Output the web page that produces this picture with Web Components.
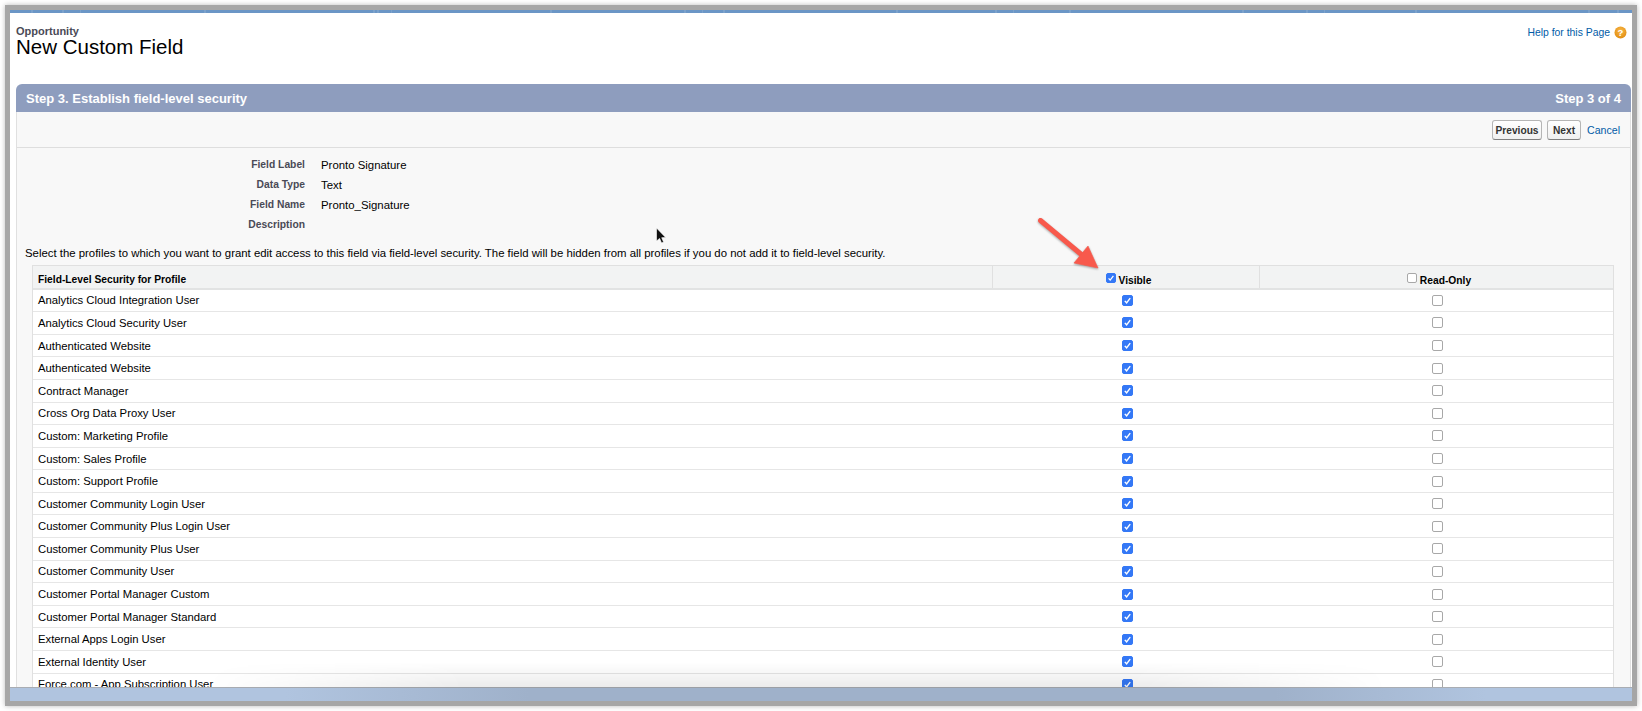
<!doctype html>
<html>
<head>
<meta charset="utf-8">
<style>
  html,body{ margin:0; height:100%; background:#fff; }
  body{ font-family:"Liberation Sans",Arial,sans-serif; overflow:hidden; }
</style>
</head>
<body>
<sf-frame>
  <sf-page-head slot="head" object="Opportunity" title="New Custom Field"></sf-page-head>
  <sf-step-bar slot="step" title="Step 3. Establish field-level security" step="Step 3 of 4"></sf-step-bar>
  <sf-actions slot="actions"></sf-actions>
  <sf-field label="Field Label">Pronto Signature</sf-field>
  <sf-field label="Data Type">Text</sf-field>
  <sf-field label="Field Name">Pronto_Signature</sf-field>
  <sf-field label="Description"></sf-field>
  <sf-note>Select the profiles to which you want to grant edit access to this field via field-level security. The field will be hidden from all profiles if you do not add it to field-level security.</sf-note>
  <sf-profile-table></sf-profile-table>
</sf-frame>

<script type="module">
// small helper, every element below just sets its shadow html once
class Base extends HTMLElement{
  render(html){
    this.attachShadow({mode:"open"}).innerHTML = html;
  }
}

class SfFrame extends Base{
  connectedCallback(){
    this.render(`
    <style>
      :host{ display:block; position:absolute; left:5px; top:5px; width:1622px; height:691px;
             border:5px solid #a6a6a6; box-shadow:0 0 5px rgba(0,0,0,.28); background:#fff; }
      .wrap{ height:100%; display:flex; flex-direction:column; }
      .stripe{ height:3px; flex:none; background-color:#6b96c6;
               background-image:linear-gradient(90deg,transparent 0 21px,#7ba1cb 21px 23px,transparent 23px),
                                linear-gradient(90deg,transparent 0 52px,#7ba1cb 52px 54px,transparent 54px 70px,#7ba1cb 70px 71px,transparent 71px);
               background-size:173px 100%,311px 100%; }
      .page{ flex:1; min-height:0; overflow:hidden; padding:0 1px 0 6px; position:relative; }
      .panel{ background:#f8f8f8; border:solid #e0e0e0; border-width:0 1px; }
      .body{ padding:7px 0 0; }
      .foot{ height:13px; flex:none; position:relative;
             border-top:1px solid #a9adb3; margin-top:-1px;
             background:linear-gradient(90deg,#b0c4df 0,#b0c4df 17%,#9fb1ca 32%,#9fb1ca 78%,#b0c4df 91%,#b0c4df 100%); }
      .foot::before{ content:""; position:absolute; left:12%; right:15%; bottom:100%; height:26px;
             background:linear-gradient(to top,rgba(0,0,0,.08),rgba(0,0,0,0));
             -webkit-mask-image:linear-gradient(90deg,transparent,#000 22%,#000 78%,transparent);
             mask-image:linear-gradient(90deg,transparent,#000 22%,#000 78%,transparent); }
      .arrow{ position:absolute; left:1020px; top:201px; }
      .cursor{ position:absolute; left:645px; top:217px; }
    </style>
    <div class="wrap">
      <div class="stripe"></div>
      <div class="page">
        <slot name="head"></slot>
        <slot name="step"></slot>
        <div class="panel">
          <slot name="actions"></slot>
          <div class="body"><slot></slot></div>
        </div>
      </div>
      <div class="foot"></div>
    </div>
    <svg class="arrow" width="74" height="64" viewBox="0 0 74 64">
      <g style="filter:drop-shadow(0 1px 1px rgba(0,0,0,.35))">
        <path d="M10.5 9.5 L52 44" stroke="#f8594c" stroke-width="5" stroke-linecap="round" fill="none"/>
        <path d="M68 57 L44 52 L58 35 Z" fill="#f8594c" stroke="#f8594c" stroke-width=".6" stroke-linejoin="round"/>
      </g>
    </svg>
    <svg class="cursor" width="12" height="18" viewBox="0 0 12 18">
      <path d="M1.5 1 L1.5 14 L4.6 11.4 L6.6 16 L8.6 15.1 L6.7 10.7 L10.6 10.4 Z" fill="#111" stroke="#fff" stroke-width=".6"/>
    </svg>`);
  }
}

class SfPageHead extends Base{
  connectedCallback(){
    this.render(`
    <style>
      :host{ display:flex; justify-content:space-between; align-items:flex-start; height:71px; }
      .obj{ font-size:11px; font-weight:700; color:#4a4a56; line-height:13px; padding-top:12px; }
      h1{ margin:-3px 0 0; font-size:20.5px; font-weight:400; color:#000; line-height:23px; }
      .help{ display:flex; align-items:center; gap:4px; padding:13px 4px 0 0; font-size:10.4px; color:#015ba7; line-height:13px; }
      svg{ display:block; }
    </style>
    <div>
      <div class="obj">${this.getAttribute("object")}</div>
      <h1>${this.getAttribute("title")}</h1>
    </div>
    <div class="help"><span>Help for this Page</span>
      <svg width="13" height="13" viewBox="0 0 13 13">
        <defs><radialGradient id="o" cx=".5" cy=".35" r=".7"><stop offset="0" stop-color="#f8b84a"/><stop offset="1" stop-color="#e08a0c"/></radialGradient></defs>
        <circle cx="6.5" cy="6.5" r="6" fill="url(#o)"/>
        <text x="6.5" y="10" text-anchor="middle" font-family="Liberation Sans" font-weight="700" font-size="9.5" fill="#fff">?</text>
      </svg>
    </div>`);
  }
}

class SfStepBar extends Base{
  connectedCallback(){
    this.render(`
    <style>
      :host{ display:flex; justify-content:space-between; align-items:center; height:28px; padding:0 10px 0 10px;
             background:#8e9dbe; border-radius:6px 6px 0 0; color:#fff; font-size:13px; font-weight:700; }
    </style>
    <span>${this.getAttribute("title")}</span><span>${this.getAttribute("step")}</span>`);
  }
}

class SfButton extends Base{
  connectedCallback(){
    this.render(`
    <style>
      :host{ display:inline-block; }
      button{ width:${this.getAttribute("width")}px; height:20px; padding:0; font:700 10.2px "Liberation Sans",Arial,sans-serif; color:#333;
              background:linear-gradient(#fff,#f0f0f0); border:1px solid #b5b5b5; border-bottom-color:#7f7f7f;
              border-radius:3px; display:block; }
    </style>
    <button><slot></slot></button>`);
  }
}

class SfActions extends Base{
  connectedCallback(){
    this.render(`
    <style>
      :host{ display:flex; justify-content:flex-end; align-items:center; gap:5px; height:36px; box-sizing:border-box;
             padding:1px 10px 0 0; border-bottom:1px solid #dedede; }
      a{ font-size:10.6px; color:#015ba7; margin-left:1px; }
    </style>
    <sf-button width="50">Previous</sf-button><sf-button width="34">Next</sf-button><a>Cancel</a>`);
  }
}

class SfField extends Base{
  connectedCallback(){
    this.render(`
    <style>
      :host{ display:grid; grid-template-columns:288px 1fr; column-gap:16px; height:19.9px; align-items:center; }
      b{ font-size:10.3px; color:#4a4a56; text-align:right; }
      span{ font-size:11.4px; color:#000; }
    </style>
    <b>${this.getAttribute("label")}</b><span><slot></slot></span>`);
  }
}

class SfNote extends Base{
  connectedCallback(){
    this.render(`
    <style>
      :host{ display:block; font-size:11.39px; color:#000; padding:11.4px 0 5px 8px; line-height:14px; white-space:nowrap; }
    </style>
    <slot></slot>`);
  }
}

class SfCheck extends Base{
  connectedCallback(){
    const on = this.hasAttribute("checked");
    const size = this.getAttribute("size") || 11;
    this.render(`
    <style>
      :host{ display:inline-block; width:${size}px; height:${size}px; }
      .box{ box-sizing:border-box; width:100%; height:100%; border-radius:2px; display:block;
            background:${on ? "#3478f6" : "#fff"}; border:1px solid ${on ? "#3478f6" : "#a8a8a8"}; }
      svg{ display:block; width:100%; height:100%; }
    </style>
    <span class="box">${on ? `<svg viewBox="0 0 10 10"><path d="M2 5.4 L4 7.6 L8 2.4" fill="none" stroke="#fff" stroke-width="1.6"/></svg>` : ""}</span>`);
  }
}

const PROFILES = [
  "Analytics Cloud Integration User","Analytics Cloud Security User","Authenticated Website","Authenticated Website",
  "Contract Manager","Cross Org Data Proxy User","Custom: Marketing Profile","Custom: Sales Profile","Custom: Support Profile",
  "Customer Community Login User","Customer Community Plus Login User","Customer Community Plus User","Customer Community User",
  "Customer Portal Manager Custom","Customer Portal Manager Standard","External Apps Login User","External Identity User",
  "Force.com - App Subscription User"
];

class SfProfileTable extends Base{
  connectedCallback(){
    const rows = PROFILES.map(p=>`
      <div class="row"><div class="c first">${p}</div>
        <div class="c mid"><sf-check checked></sf-check></div>
        <div class="c mid"><sf-check></sf-check></div></div>`).join("");
    this.render(`
    <style>
      :host{ display:block; margin:0 16px 0 15px; background:#fff; border:solid #e0e0e0; border-width:1px 1px 0; }
      .row{ display:grid; grid-template-columns:959px 267px 1fr; height:22.6px; box-sizing:border-box;
            border-bottom:1px solid #e6e6e6; font-size:11.3px; color:#000; }
      .c{ display:flex; align-items:center; }
      .first{ padding-left:5px; white-space:nowrap; }
      .mid{ justify-content:center; padding-left:3px; }
      .head{ height:23.6px; background:#f2f3f3; border-bottom:2px solid #e2e3e3; font-size:10.25px; font-weight:700; }
      .head .first{ padding-top:5px; }
      .head .c + .c{ border-left:1px solid #e0e0e0; padding-top:7px; padding-left:5px; }
      .head .mid{ gap:3px; }
      .head sf-check{ margin-top:-5px; }
    </style>
    <div class="row head">
      <div class="c first">Field-Level Security for Profile</div>
      <div class="c mid"><sf-check checked size="10"></sf-check>Visible</div>
      <div class="c mid"><sf-check size="10"></sf-check>Read-Only</div>
    </div>${rows}`);
  }
}

customElements.define("sf-frame", SfFrame);
customElements.define("sf-page-head", SfPageHead);
customElements.define("sf-step-bar", SfStepBar);
customElements.define("sf-button", SfButton);
customElements.define("sf-actions", SfActions);
customElements.define("sf-field", SfField);
customElements.define("sf-note", SfNote);
customElements.define("sf-check", SfCheck);
customElements.define("sf-profile-table", SfProfileTable);
</script>
</body>
</html>
